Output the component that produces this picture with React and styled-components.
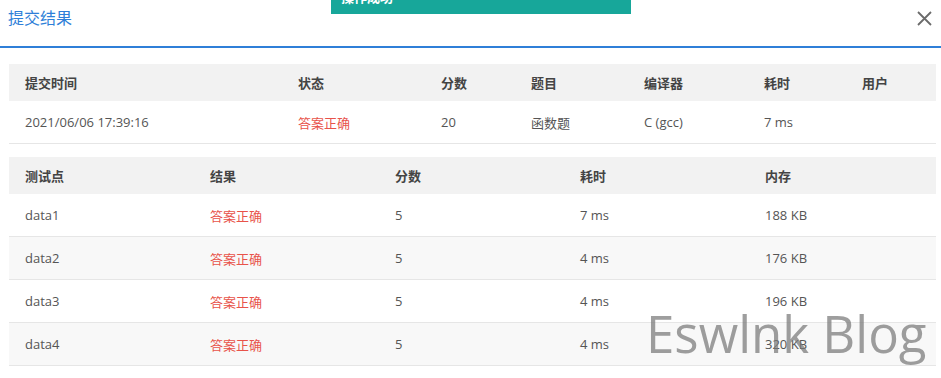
import styled, { createGlobalStyle } from "styled-components";

const GlobalStyle = createGlobalStyle`
  body {
    margin: 0;
    background: #fff;
    font-family: "Open Sans", "Noto Sans CJK SC", sans-serif;
  }
`;

const summaryCols = "273px 143px 90px 113px 120px 98px 90px";
const caseCols = "185px 185px 185px 185px 187px";

const summary = ["2021/06/06 17:39:16", "答案正确", "20", "函数题", "C (gcc)", "7 ms", ""];

const cases = [
  { name: "data1", score: 5, time: "7 ms", mem: "188 KB" },
  { name: "data2", score: 5, time: "4 ms", mem: "176 KB" },
  { name: "data3", score: 5, time: "4 ms", mem: "196 KB" },
  { name: "data4", score: 5, time: "4 ms", mem: "320 KB" },
];

const App = () => {
  return (
    <Dialog>
      <GlobalStyle />
      <Toast>
        <span>操作成功</span>
      </Toast>
      <TitleBar>
        <Title>提交结果</Title>
        <Close aria-label="close">
          <svg width="15" height="15" viewBox="0 0 15 15">
            <path d="M1 1L14 14M14 1L1 14" stroke="#6b6b6b" strokeWidth="1.8" />
          </svg>
        </Close>
      </TitleBar>
      <Body>
        <Table>
          <Row $cols={summaryCols} $head>
            {["提交时间", "状态", "分数", "题目", "编译器", "耗时", "用户"].map((h) => (
              <HeadCell key={h}>{h}</HeadCell>
            ))}
          </Row>
          <Row $cols={summaryCols}>
            {summary.map((v, i) => (
              <Cell key={i} $ok={i === 1}>
                {v}
              </Cell>
            ))}
          </Row>
        </Table>
        <Table>
          <Row $cols={caseCols} $head>
            {["测试点", "结果", "分数", "耗时", "内存"].map((h) => (
              <HeadCell key={h}>{h}</HeadCell>
            ))}
          </Row>
          {cases.map((c, i) => (
            <Row key={c.name} $cols={caseCols} $striped={i % 2 === 1}>
              <Cell>{c.name}</Cell>
              <Cell $ok>答案正确</Cell>
              <Cell>{c.score}</Cell>
              <Cell>{c.time}</Cell>
              <Cell>{c.mem}</Cell>
            </Row>
          ))}
        </Table>
      </Body>
      <Watermark>Eswlnk Blog</Watermark>
    </Dialog>
  );
};

const Dialog = styled.div`
  position: relative;
  width: 941px;
  height: 378px;
  overflow: hidden;
  background: #fff;
`;

const Toast = styled.div`
  position: absolute;
  top: 0;
  left: 331px;
  width: 300px;
  height: 14px;
  background: #17a79a;
  overflow: hidden;
  span {
    display: block;
    margin: -11px 0 0 10px;
    color: #fff;
    font-size: 13px;
    font-weight: 700;
    line-height: 16px;
  }
`;

const TitleBar = styled.div`
  display: flex;
  align-items: center;
  justify-content: space-between;
  height: 36px;
  padding: 0 8px 10px 8px;
  border-bottom: 2px solid #2f7fd8;
`;

const Title = styled.h3`
  margin: 0;
  font-size: 16px;
  font-weight: 400;
  color: #2f7fd8;
  line-height: 36px;
`;

const Close = styled.button`
  display: flex;
  padding: 0;
  margin-right: 1px;
  border: 0;
  background: none;
  cursor: pointer;
`;

const Body = styled.div`
  display: flex;
  flex-direction: column;
  gap: 13px;
  padding: 16px 5px 0 9px;
`;

const Table = styled.div`
  display: flex;
  flex-direction: column;
  width: 927px;
`;

const Row = styled.div`
  display: grid;
  grid-template-columns: ${(p) => p.$cols};
  align-items: center;
  height: ${(p) => (p.$head ? "37px" : "42px")};
  background: ${(p) => (p.$head ? "#f2f2f2" : p.$striped ? "#f8f8f8" : "#fff")};
  border-bottom: ${(p) => (p.$head ? "none" : "1px solid #e6e6e6")};
`;

const HeadCell = styled.div`
  padding-left: 16px;
  font-size: 13px;
  font-weight: 700;
  color: #444;
`;

const Cell = styled.div`
  padding-left: 16px;
  font-size: 13px;
  color: ${(p) => (p.$ok ? "#e8534a" : "#555")};
`;

const Watermark = styled.div`
  position: absolute;
  left: 646px;
  top: 298px;
  font-family: "Open Sans", sans-serif;
  font-size: 51px;
  color: rgba(120, 120, 120, 0.72);
  white-space: nowrap;
  pointer-events: none;
`;

export default App;
